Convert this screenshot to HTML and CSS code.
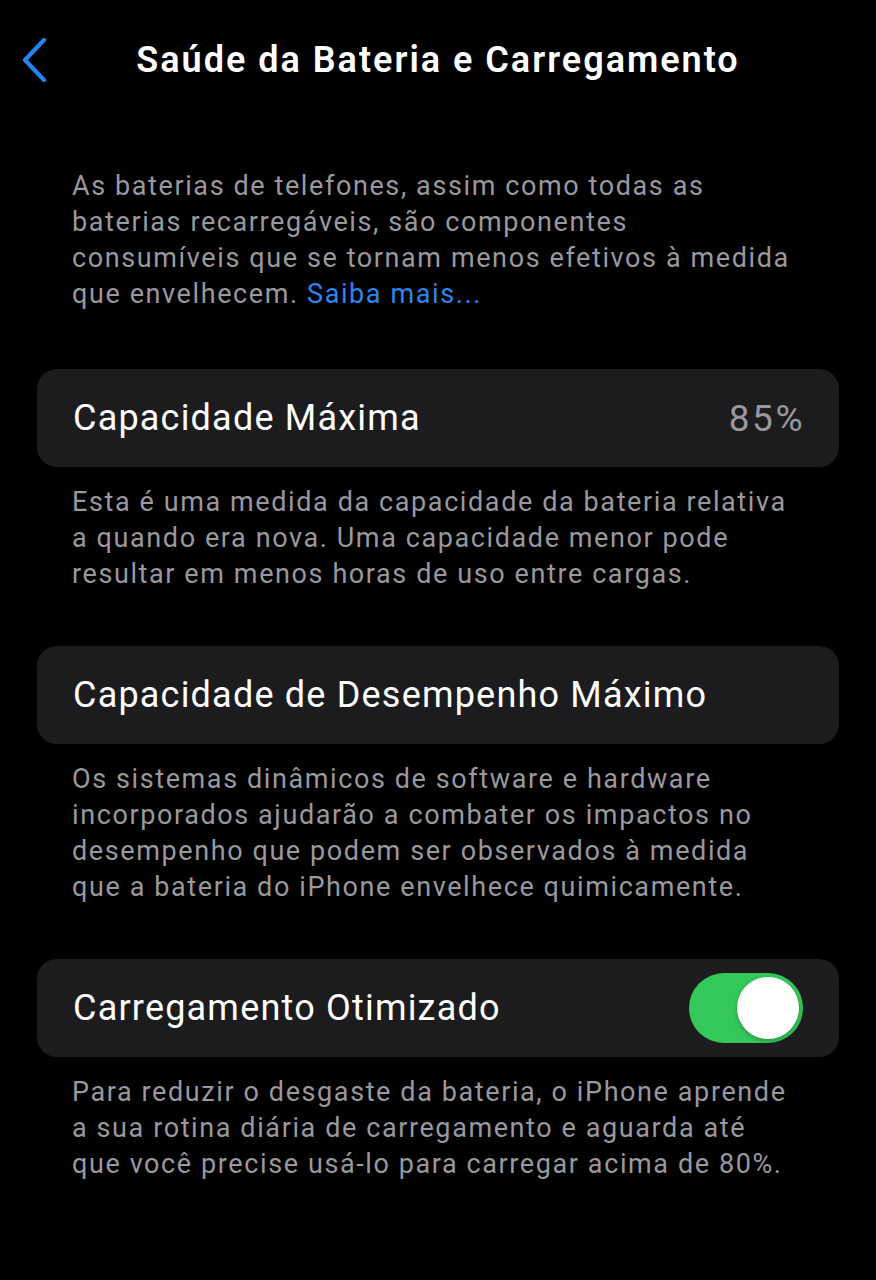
FILE: index.html
```html
<!DOCTYPE html>
<html lang="pt-BR">
<head>
<meta charset="utf-8">
<title>Saúde da Bateria e Carregamento</title>
<link rel="stylesheet" href="styles.css">
</head>
<body>
<div class="screen">
  <header class="nav">
    <span class="back" aria-label="Voltar">
      <svg width="26" height="44" viewBox="0 0 26 44"><path d="M23 2 L4 22 L23 42" fill="none" stroke="#1f84f5" stroke-width="4.2" stroke-linecap="round" stroke-linejoin="round"/></svg>
    </span>
    <h1 class="title">Saúde da Bateria e Carregamento</h1>
  </header>

  <p class="note intro">As baterias de telefones, assim como todas as<br>baterias recarregáveis, são componentes<br>consumíveis que se tornam menos efetivos à medida<br>que envelhecem. <a class="link">Saiba mais...</a></p>

  <section class="group">
    <div class="card">
      <span class="label">Capacidade Máxima</span>
      <span class="value">85%</span>
    </div>
    <p class="note">Esta é uma medida da capacidade da bateria relativa<br>a quando era nova. Uma capacidade menor pode<br>resultar em menos horas de uso entre cargas.</p>
  </section>

  <section class="group">
    <div class="card">
      <span class="label">Capacidade de Desempenho Máximo</span>
    </div>
    <p class="note">Os sistemas dinâmicos de software e hardware<br>incorporados ajudarão a combater os impactos no<br>desempenho que podem ser observados à medida<br>que a bateria do iPhone envelhece quimicamente.</p>
  </section>

  <section class="group">
    <div class="card">
      <span class="label">Carregamento Otimizado</span>
      <span class="toggle on"><span class="knob"></span></span>
    </div>
    <p class="note">Para reduzir o desgaste da bateria, o iPhone aprende<br>a sua rotina diária de carregamento e aguarda até<br>que você precise usá-lo para carregar acima de 80%.</p>
  </section>
</div>
</body>
</html>
```

FILE: styles.css
```css
html, body {
  margin: 0;
  padding: 0;
  background: #000;
}

.screen {
  width: 876px;
  min-height: 1280px;
  background: #000;
  font-family: Roboto, "Liberation Sans", sans-serif;
  color: #fff;
}

.nav {
  position: relative;
  height: 120px;
  display: flex;
  align-items: flex-start;
  justify-content: center;
}

.back {
  position: absolute;
  left: 21px;
  top: 38px;
  width: 26px;
  height: 44px;
}

.back svg {
  display: block;
}

.title {
  margin: 0;
  padding-top: 37px;
  font-size: 36px;
  line-height: 46px;
  font-weight: 600;
  color: #fff;
  letter-spacing: 2px;
}

.note {
  margin: 0;
  padding: 0 60px 0 72px;
  font-size: 27px;
  line-height: 36px;
  color: #98989e;
  letter-spacing: 1.6px;
  white-space: nowrap;
}

.intro {
  margin-top: 48px;
}

.link {
  color: #2b86f0;
}

.group {
  margin-top: 57px;
}

.group + .group {
  margin-top: 54px;
}

.card {
  margin: 0 37px;
  height: 98px;
  border-radius: 20px;
  background: #1c1c1e;
  display: flex;
  align-items: center;
  justify-content: space-between;
  padding: 0 36px;
  box-sizing: border-box;
}

.card + .note {
  margin-top: 17px;
}

.label {
  font-size: 36px;
  color: #fff;
  letter-spacing: 1.2px;
}

.value {
  font-size: 37px;
  color: #98989e;
  letter-spacing: 2.5px;
  margin-right: -2px;
}

.toggle {
  width: 114px;
  height: 70px;
  border-radius: 35px;
  background: #34c759;
  position: relative;
  box-sizing: border-box;
}

.knob {
  position: absolute;
  right: 4px;
  top: 4px;
  width: 62px;
  height: 62px;
  border-radius: 50%;
  background: #fff;
  box-shadow: 0 2px 4px rgba(0,0,0,0.25);
}
```
